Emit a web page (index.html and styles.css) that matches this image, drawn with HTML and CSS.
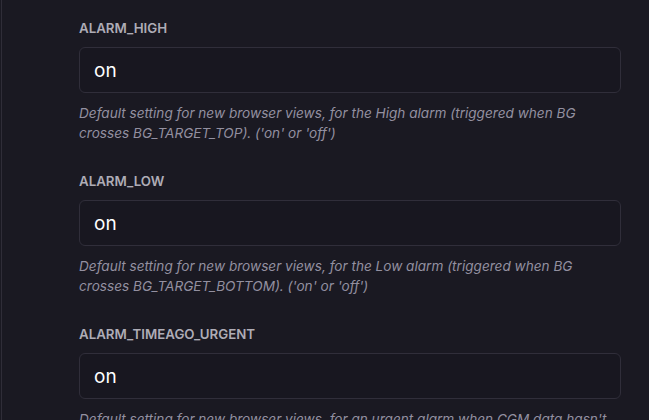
FILE: index.html
```html
<!DOCTYPE html>
<html lang="en">
<head>
<meta charset="utf-8">
<link rel="stylesheet" href="styles.css">
</head>
<body>
<div class="frame">
  <div class="settings">
    <div class="field">
      <label class="label">ALARM_HIGH</label>
      <div class="input">on</div>
      <p class="desc">Default setting for new browser views, for the High alarm (triggered when BG crosses BG_TARGET_TOP). ('on' or 'off')</p>
    </div>
    <div class="field">
      <label class="label">ALARM_LOW</label>
      <div class="input">on</div>
      <p class="desc">Default setting for new browser views, for the Low alarm (triggered when BG crosses BG_TARGET_BOTTOM). ('on' or 'off')</p>
    </div>
    <div class="field">
      <label class="label">ALARM_TIMEAGO_URGENT</label>
      <div class="input">on</div>
      <p class="desc">Default setting for new browser views, for an urgent alarm when CGM data hasn't been received in the configured number of minutes. ('on' or 'off')</p>
    </div>
  </div>
</div>
</body>
</html>
```

FILE: styles.css
```css
html, body {
  margin: 0;
  padding: 0;
  background: #1a1922;
  height: 100%;
  overflow: hidden;
}
.frame {
  height: 420px;
  border-left: 1px solid #2f2d38;
  border-right: 1px solid #2f2d38;
  margin-left: 1px;
  box-sizing: border-box;
  width: 649px;
  overflow: hidden;
}
.settings {
  padding: 20px 28px 0 77px;
  display: flex;
  flex-direction: column;
  gap: 30px;
  font-family: Inter, "Noto Sans", sans-serif;
}
.field {
  display: flex;
  flex-direction: column;
}
.label {
  display: block;
  font-size: 13.3px;
  line-height: 16px;
  font-weight: 600;
  color: #aeacb6;
  margin-bottom: 11px;
}
.input {
  height: 46px;
  box-sizing: border-box;
  border: 1px solid #302e3a;
  border-radius: 6px;
  background: #181720;
  color: #ffffff;
  font-size: 19px;
  font-weight: 400;
  padding: 0 14px;
  display: flex;
  align-items: center;
}
.desc {
  margin: 10px 0 0;
  font-size: 13.6px;
  line-height: 20px;
  font-style: italic;
  color: #9390a0;
}
```
